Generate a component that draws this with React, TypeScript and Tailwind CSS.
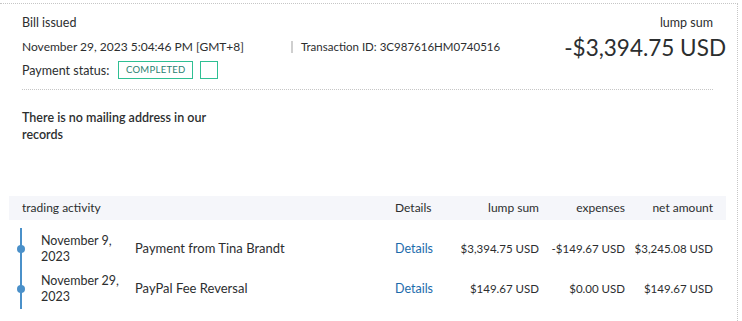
import React from 'react';

const rows = [
  { date: 'November 9, 2023', desc: 'Payment from Tina Brandt', gross: '$3,394.75 USD', fee: '-$149.67 USD', net: '$3,245.08 USD' },
  { date: 'November 29, 2023', desc: 'PayPal Fee Reversal', gross: '$149.67 USD', fee: '$0.00 USD', net: '$149.67 USD' },
];

export default function App() {
  return (
    <div className="w-[742px] h-[321px] bg-white overflow-hidden text-[#2c2e2f]" style={{ fontFamily: 'Lato, "Noto Sans", sans-serif' }}>
      <div className="mt-[3px] w-[738px] h-[318px] border-t border-r border-dotted border-[#c6c6c6]">
        {/* header */}
        <div className="pl-[22px] pr-[24px] pt-[10px]">
          <div className="flex justify-between">
            <div className="text-[12.5px] leading-[17px]">
              <div>Bill issued</div>
              <div className="mt-[7px] flex items-center">
                <span className="w-[269px] text-[12px]">November 29, 2023 5:04:46 PM [GMT+8]</span>
                <span className="w-[2px] h-[12px] bg-[#cfcfcf] mr-[8px]"></span>
                <span className="text-[11.5px]">Transaction ID: 3C987616HM0740516</span>
              </div>
              <div className="mt-[6px] flex items-center">
                <span className="text-[12.5px]">Payment status:</span>
                <span className="ml-[9px] w-[75px] h-[18px] border border-[#2fbf93] text-[9.5px] leading-[16px] text-center text-[#2a7f70] tracking-[0.3px]">COMPLETED</span>
                <span className="ml-[7px] w-[18px] h-[18px] border border-[#2fbf93]"></span>
              </div>
            </div>
            <div className="text-right">
              <div className="text-[12.5px] leading-[17px]">lump sum</div>
              <div className="-mr-[13px] mt-[4px] text-[22.5px] leading-[26px]">-$3,394.75 USD</div>
            </div>
          </div>
          <div className="mt-[10px] border-t border-dotted border-[#c6c6c6]"></div>
          <div className="mt-[19px] w-[200px] text-[12.5px] leading-[17px] font-semibold">
            There is no mailing address in our records
          </div>
        </div>

        {/* activity table */}
        <div className="mt-[53px] ml-[9px] w-[717px]">
          <div className="h-[24px] bg-[#f5f6fa] flex items-center text-[12px]">
            <span className="pl-[13px] w-[386px]">trading activity</span>
            <span className="w-[60px]">Details</span>
            <span className="w-[84px] text-right">lump sum</span>
            <span className="w-[86px] text-right">expenses</span>
            <span className="w-[88px] text-right">net amount</span>
          </div>
          <div className="relative mt-[9px]">
            <div className="absolute left-[11px] -top-[1px] h-[81px] w-[2px] bg-[#4a90c9]"></div>
            {rows.map((r, i) => (
              <div key={i} className="relative flex items-center h-[40px] text-[12.5px]">
                <span className="absolute left-[8px] top-[16px] w-[8px] h-[8px] rounded-full bg-[#4a90c9]"></span>
                <span className="pl-[32px] w-[126px] leading-[16px]">{r.date}</span>
                <span className="w-[260px] text-[13px]">{r.desc}</span>
                <span className="w-[60px] text-[#1b6bab]">Details</span>
                <span className="w-[84px] text-right text-[11.5px]">{r.gross}</span>
                <span className="w-[86px] text-right text-[11.5px]">{r.fee}</span>
                <span className="w-[88px] text-right text-[11.5px]">{r.net}</span>
              </div>
            ))}
          </div>
        </div>
      </div>
    </div>
  );
}
